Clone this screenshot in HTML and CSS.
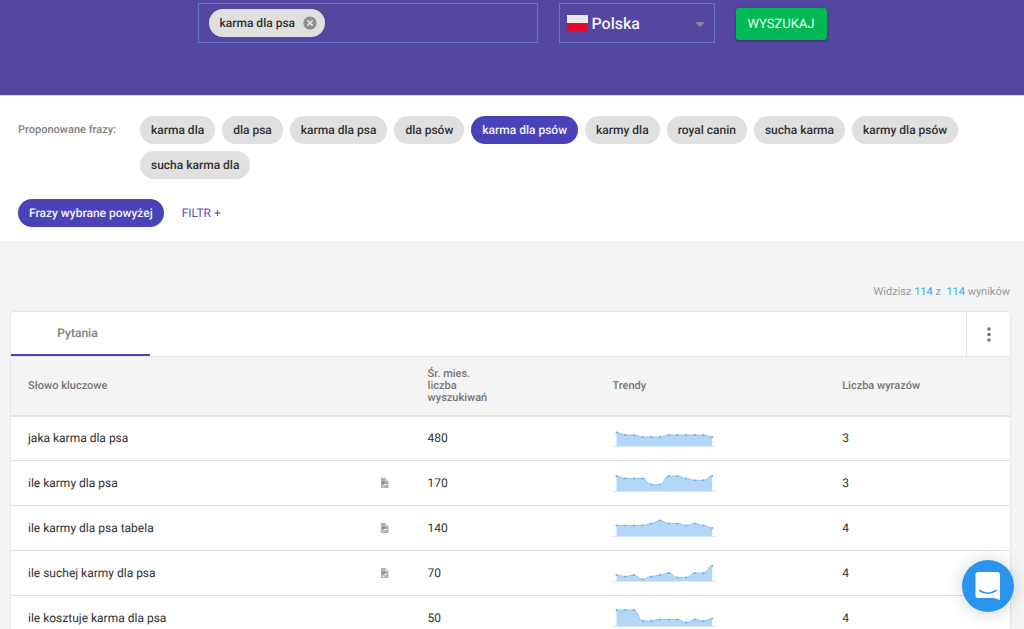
FILE: index.html
```html
<!DOCTYPE html>
<html lang="pl">
<head>
<meta charset="utf-8">
<meta name="viewport" content="width=device-width, initial-scale=1">
<title>karma dla psa</title>
<link rel="stylesheet" href="styles.css">
</head>
<body>
<form class="search">
  <div class="field phrase-field">
    <span class="chip chip-removable">karma dla psa
      <button class="chip-remove" type="button" aria-label="Usuń">
        <svg viewBox="0 0 14 14" width="14" height="14"><circle cx="7" cy="7" r="6.6" fill="#909090"/><path d="M4.4 4.4l5.2 5.2M9.6 4.4L4.4 9.6" stroke="#e0e0e0" stroke-width="1.5"/></svg>
      </button>
    </span>
    <input class="phrase-input" type="text" aria-label="Fraza">
  </div>
  <div class="field country-field">
    <svg class="flag" viewBox="0 0 21 16" width="21" height="16"><path d="M0 0h21v8H0z" fill="#e9e8e7"/><path d="M0 8h21v8H0z" fill="#e8082c"/></svg>
    <select class="country" aria-label="Kraj"><option>Polska</option></select>
    <svg class="caret" viewBox="0 0 10 5" width="10" height="5"><path d="M0 0h10L5 5z" fill="#8a86a0"/></svg>
  </div>
  <button class="submit" type="submit">WYSZUKAJ</button>
</form>

<section class="filters">
  <div class="proposals">
    <span class="proposals-label">Proponowane frazy:</span>
    <div class="chips">
      <button class="chip" type="button">karma dla</button>
      <button class="chip" type="button">dla psa</button>
      <button class="chip" type="button">karma dla psa</button>
      <button class="chip" type="button">dla psów</button>
      <button class="chip chip-active" type="button">karma dla psów</button>
      <button class="chip" type="button">karmy dla</button>
      <button class="chip" type="button">royal canin</button>
      <button class="chip" type="button">sucha karma</button>
      <button class="chip" type="button">karmy dla psów</button>
      <button class="chip" type="button">sucha karma dla</button>
    </div>
  </div>
  <div class="filter-actions">
    <button class="chip chip-active" type="button">Frazy wybrane powyżej</button>
    <button class="filter-add" type="button">FILTR +</button>
  </div>
</section>

<main class="results">
  <p class="count">Widzisz <b>114</b> z &nbsp;<b>114</b> wyników</p>
  <div class="card">
    <div class="tabs">
      <button class="tab" type="button">Pytania</button>
      <button class="menu" type="button" aria-label="Menu">
        <svg viewBox="0 0 4 15" width="4" height="15" fill="#757575"><circle cx="2" cy="2" r="1.8"/><circle cx="2" cy="7.5" r="1.8"/><circle cx="2" cy="13" r="1.8"/></svg>
      </button>
    </div>
    <table class="table">
      <colgroup><col class="col-word"><col class="col-volume"><col class="col-trend"><col class="col-length"></colgroup>
      <thead>
        <tr><th>Słowo kluczowe</th><th>Śr. mies.<br>liczba<br>wyszukiwań</th><th>Trendy</th><th>Liczba wyrazów</th></tr>
      </thead>
      <tbody>
        <tr><td>jaka karma dla psa</td><td>480</td><td><svg class="trend" data-values="13.5,11,11,9,9,9,11,11,11,11,11,9"></svg></td><td>3</td></tr>
        <tr><td><div class="word">ile karmy dla psa<svg class="note" viewBox="0 0 9 10" width="9" height="10"><use href="#note"/></svg></div></td><td>170</td><td><svg class="trend" data-values="15,12.5,12.5,12.5,6.5,6.5,15,15,12.5,10.7,10.7,15"></svg></td><td>3</td></tr>
        <tr><td><div class="word">ile karmy dla psa tabela<svg class="note" viewBox="0 0 9 10" width="9" height="10"><use href="#note"/></svg></div></td><td>140</td><td><svg class="trend" data-values="10.5,10.5,10.5,10.5,12.5,15.5,12.5,12.5,10.5,12.5,10.5,8"></svg></td><td>4</td></tr>
        <tr><td><div class="word">ile suchej karmy dla psa<svg class="note" viewBox="0 0 9 10" width="9" height="10"><use href="#note"/></svg></div></td><td>70</td><td><svg class="trend" data-values="6,4.5,6,1.7,4.5,6,8,3.5,3.5,8,8,15"></svg></td><td>4</td></tr>
        <tr><td>ile kosztuje karma dla psa</td><td>50</td><td><svg class="trend" data-values="16,16,16,5,5,6.5,6.5,6.5,3.5,6.5,5,7.5"></svg></td><td>4</td></tr>
      </tbody>
    </table>
  </div>
</main>

<button class="chat" type="button" aria-label="Czat">
  <svg viewBox="0 0 26 29" width="26" height="29"><path d="M3 0h19.500a2.500 2.500 0 0 1 2.500 2.500V28l-6-2H3a2.500 2.500 0 0 1-2.500-2.500v-21A2.500 2.500 0 0 1 3 0z" fill="#fff"/><path d="M4.500 18.500q8.200 5.500 16.500 0" fill="none" stroke="#2b94ee" stroke-width="1.6" stroke-linecap="round"/></svg>
</button>

<svg width="0" height="0" class="symbols">
  <symbol id="note" viewBox="0 0 9 10"><path d="M1 0h4.500L8.500 3v7H1z" fill="#b0b0b0"/><path d="M5.500 0v3h3z" fill="#e4e4e4"/><path d="M2 3.800h3v2H2z" fill="#858585"/><path d="M4 6.500h3M2.500 8.300h2" stroke="#f0f0f0"/></symbol>
</svg>
<script src="script.js"></script>
</body>
</html>
```
FILE: styles.css
```css
* { box-sizing: border-box; }
body {
  margin: 0;
  background: #f4f4f4;
  color: #303030;
  font-family: Roboto, "Liberation Sans", sans-serif;
  font-size: 12px;
  text-rendering: geometricPrecision;
}
button, input, select { margin: 0; font: inherit; color: inherit; text-rendering: inherit; }
button { border: 0; padding: 0; background: none; cursor: pointer; }

.search {
  display: flex;
  justify-content: center;
  gap: 21px;
  padding: 3px 16px 52px;
  background: #5546a0;
}
.field {
  display: flex;
  align-items: center;
  height: 40px;
  border: 1px solid #6474c8;
}
.phrase-field { flex: 0 1 340px; padding: 0 10px; }
.phrase-input { flex: 1; min-width: 0; border: 0; outline: 0; background: none; color: #fff; }
.country-field { position: relative; flex: 0 0 156px; padding: 0 7px; gap: 4px; }
.country {
  flex: 1;
  border: 0;
  outline: 0;
  appearance: none;
  background: none;
  color: #f2f0fa;
  font-size: 16px;
  font-weight: 500;
}
.caret { position: absolute; right: 9px; top: 18px; pointer-events: none; }
.submit {
  align-self: center;
  width: 91px;
  height: 32px;
  margin-top: 2px;
  border-radius: 3px;
  background: #00b955;
  box-shadow: 0 1px 3px rgba(0, 0, 0, .35);
  color: #e6fff0;
  font-size: 13px;
}

.chip {
  display: inline-flex;
  align-items: center;
  height: 28px;
  padding: 0 11px;
  border-radius: 14px;
  background: #e0e0e0;
  color: #303030;
  font-weight: 500;
  white-space: nowrap;
}
.chip-removable { gap: 8px; padding-right: 8px; }
.chip-remove { display: flex; }
.chip-active { background: #4a42b8; color: #f4f2ff; }

.filters { padding: 20px 18px 14px; background: #fff; border-top: 1px solid #d5d1e8; }
.proposals { display: flex; }
.proposals-label {
  flex: 0 0 122px;
  color: #808080;
  font-size: 11px;
  font-weight: 500;
  line-height: 28px;
}
.chips { display: flex; flex-wrap: wrap; gap: 7px; }
.filter-actions { display: flex; align-items: center; gap: 18px; margin-top: 20px; }
.filter-add { color: #5a50c0; }

.results { padding: 43px 14px 0 11px; }
.count { margin: 0 0 12px; color: #999; font-size: 11px; line-height: 16px; text-align: right; }
.count b { color: #29a9f5; font-weight: 400; }
.card {
  overflow: hidden;
  border-radius: 3px 3px 0 0;
  background: #fff;
  box-shadow: 0 0 2px rgba(0, 0, 0, .2);
}
.tabs { display: flex; justify-content: space-between; height: 44px; }
.tab {
  width: 139px;
  padding-right: 6px;
  border-bottom: 2px solid #4a42b8;
  color: #808080;
  font-weight: 500;
}
.menu {
  display: flex;
  align-items: center;
  justify-content: center;
  width: 44px;
  border-left: 1px solid #e2e2e2;
}
.table { width: 100%; border-collapse: collapse; table-layout: fixed; }
.col-word { width: 40%; }
.col-volume { width: 18.5%; }
.col-trend { width: 23%; }
.table th, .table td { padding: 0 17px; text-align: left; }
.table th {
  height: 59px;
  border-top: 1px solid #e4e4e4;
  border-bottom: 2px solid #e4e4e4;
  background: #f4f4f4;
  color: #757575;
  font-size: 11px;
  font-weight: 500;
  line-height: 12px;
}
.table td { height: 45px; border-bottom: 1px solid #e2e2e2; }
.word { display: flex; align-items: center; justify-content: space-between; padding-right: 5px; }
.trend { display: block; width: 104px; height: 32px; }
.trend-base { stroke: #d3e7fa; }
.trend-area { fill: #b5d7f7; }
.trend-line { fill: none; stroke: #8cc2f2; }
.trend-dot { fill: #65aeec; }

.chat {
  position: fixed;
  right: 10px;
  bottom: 17px;
  display: flex;
  align-items: center;
  justify-content: center;
  width: 52px;
  height: 52px;
  border-radius: 50%;
  background: #2b94ee;
  box-shadow: 0 1px 18px rgba(0, 0, 0, .18);
}
.symbols { position: absolute; }
```
FILE: script.js
```js
const NS = "http://www.w3.org/2000/svg";
const BASE = 24;
const START = 4.5;
const STEP = 8.7;

function add(svg, tag, attrs) {
  const el = document.createElementNS(NS, tag);
  for (const key in attrs) el.setAttribute(key, attrs[key]);
  svg.appendChild(el);
}

document.querySelectorAll(".trend").forEach((svg) => {
  const points = svg.dataset.values.split(",").map((v, i) => [START + i * STEP, BASE - v]);
  let line = "M" + points[0];
  for (let i = 1; i < points.length; i++) {
    const [x0, y0] = points[i - 1];
    const [x1, y1] = points[i];
    const mid = (x0 + x1) / 2;
    line += `C${mid},${y0} ${mid},${y1} ${x1},${y1}`;
  }
  const end = points[points.length - 1][0];
  svg.setAttribute("viewBox", "0 0 104 32");
  add(svg, "path", { class: "trend-base", d: `M0 ${BASE + 0.5}H104` });
  add(svg, "path", { class: "trend-area", d: `${line}V${BASE}H${START}Z` });
  add(svg, "path", { class: "trend-line", d: line });
  points.forEach(([cx, cy]) => add(svg, "circle", { class: "trend-dot", cx, cy, r: 1 }));
});
```
